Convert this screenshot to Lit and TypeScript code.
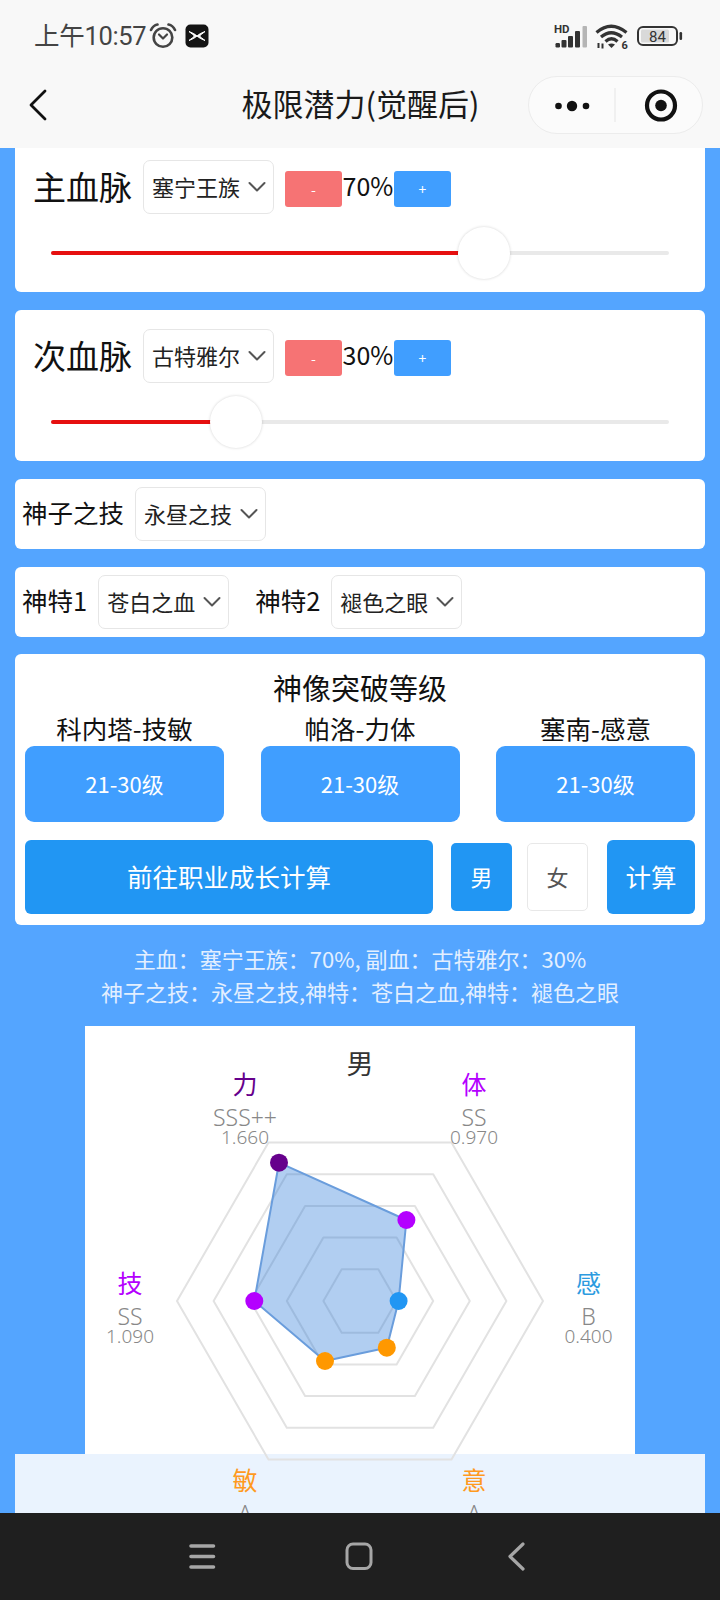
import { LitElement, html, css, svg } from "lit";
import { customElement } from "lit/decorators.js";

const FONT = `"Noto Sans CJK SC", "Noto Sans", sans-serif`;

const chevron = html`<svg class="chev" viewBox="0 0 18 12"><path d="M1.5 2 L9 9.5 L16.5 2" fill="none" stroke="#555" stroke-width="2" stroke-linecap="round" stroke-linejoin="round"/></svg>`;

const CX = 360, CY = 1301, R = 183;
const hex = (r: number) =>
  Array.from({ length: 6 }, (_, i) => {
    const a = (i * Math.PI) / 3;
    return `${(CX + r * Math.cos(a)).toFixed(1)},${(CY + r * Math.sin(a)).toFixed(1)}`;
  }).join(" ");

const points = [
  { x: 279, y: 1162.7, c: "#66008c" },
  { x: 406.4, y: 1220, c: "#b400ff" },
  { x: 398.6, y: 1301, c: "#2196f3" },
  { x: 386.8, y: 1347.7, c: "#ff9800" },
  { x: 325, y: 1361, c: "#ff9800" },
  { x: 254.3, y: 1301, c: "#b400ff" },
];

const labels = [
  { x: 245, y: 1086, t: "力", g: "SSS++", v: "1.660", c: "#66008c" },
  { x: 474, y: 1086, t: "体", g: "SS", v: "0.970", c: "#b400ff" },
  { x: 130, y: 1285, t: "技", g: "SS", v: "1.090", c: "#b400ff" },
  { x: 588.5, y: 1285, t: "感", g: "B", v: "0.400", c: "#2d9be0" },
  { x: 245, y: 1482, t: "敏", g: "A", v: "", c: "#ff9a1f" },
  { x: 474, y: 1482, t: "意", g: "A", v: "", c: "#ff9a1f" },
];

@customElement("app-root")
export class AppRoot extends LitElement {
  static styles = css`
    :host { display: block; width: 720px; height: 1600px; overflow: hidden; font-family: ${css([FONT] as any)}; color: #111; }
    .page { display: flex; flex-direction: column; height: 1600px; background: #54a5ff; }
    .top { background: #f8f8f8; height: 148px; flex: none; display: flex; flex-direction: column; position: relative; z-index: 2; }
    .status { height: 74px; display: flex; align-items: center; padding: 0 37px 2px 34px; box-sizing: border-box; }
    .time { font-size: 25.5px; color: #444; font-family: Roboto, ${css([FONT] as any)}; letter-spacing: -0.3px; line-height: 30px; }
    .alarm { width: 28px; height: 26px; margin-left: 3px; }
    .xapp { width: 24px; height: 24px; margin-left: 8px; }
    .spacer { flex: 1; }
    .sig { width: 36px; height: 26px; }
    .wifi { width: 34px; height: 28px; margin-left: 5px; overflow: visible; }
    .bat { width: 46px; height: 20px; margin-left: 8px; }
    .nav { height: 74px; display: grid; grid-template-columns: 1fr auto 1fr; align-items: center; padding: 0 17px 0 28px; box-sizing: border-box; }
    .back { width: 20px; height: 32px; margin-top: -12px; }
    .title { text-align: center; font-size: 31px; line-height: 40px; margin-top: -16px; color: #1a1a1a; white-space: nowrap; position: relative; left: -5px; }
    .capsule { width: 175px; height: 58px; box-sizing: border-box; border: 1px solid #ececec; border-radius: 29px; background: #fbfbfb; margin-top: -12px; justify-self: end; }
    .capsule svg { display: block; width: 173px; height: 56px; }

    .content { flex: 1; min-height: 0; overflow: hidden; display: flex; flex-direction: column; }
    .card { background: #fff; margin: 18px 15px 0; border-radius: 6px; box-sizing: border-box; flex: none; }
    .card.first { margin-top: 0; border-radius: 0 0 6px 6px; padding: 12px 0 13px; }
    .card.blood { padding: 19px 0 13px; }
    .blood-row { display: flex; align-items: center; height: 54px; padding-left: 19px; }
    .big { font-size: 33px; line-height: 44px; width: 97px; white-space: nowrap; margin: -2px 13px 0 -1px; }
    .sel { flex: none; width: 131px; height: 54px; box-sizing: border-box; border: 1px solid #e6e6e6; border-radius: 7px; background: #fff; display: flex; align-items: center; padding: 0 0 2px 8px; font-size: 22px; color: #222; white-space: nowrap; }
    .sel span { width: 88px; }
    .chev { width: 18px; height: 12px; margin: 2px 0 0 8px; }
    .step { width: 57px; height: 36px; border-radius: 3px; color: #fff; display: flex; align-items: center; justify-content: center; font-size: 14px; margin-top: 4px; flex: none; }
    .minus { background: #f67374; margin-left: 11px; }
    .plus { background: #409eff; }
    .pct { font-size: 25px; width: 52px; line-height: 36px; text-align: center; white-space: nowrap; margin-top: -4px; }
    .slider { position: relative; height: 52px; margin: 13px 36px 0; display: flex; align-items: center; }
    .track { width: 100%; height: 4px; background: #e9e9e9; border-radius: 3px; overflow: hidden; }
    .fill { height: 100%; background: #e60f0f; }
    .knob { position: absolute; top: 0; width: 52px; height: 52px; margin-left: -26px; border-radius: 50%; background: #fff; box-shadow: 0 0 3px rgba(0,0,0,.18); }

    .card.line { height: 70px; display: flex; align-items: center; padding-left: 7px; }
    .mid { font-size: 25.5px; line-height: 36px; white-space: nowrap; margin: -4px 11px 0 0; }
    .gap { margin-left: 26px; }

    .card.statue { height: 271px; margin-top: 17px; padding: 16px 10px 0; }
    .statue-title { text-align: center; font-size: 29px; line-height: 34px; height: 34px; margin-bottom: 6px; }
    .cols { display: grid; grid-template-columns: 199px 199px 199px; justify-content: space-between; }
    .col { text-align: center; }
    .sub { font-size: 25.5px; line-height: 36px; height: 36px; white-space: nowrap; }
    .lvl { height: 76px; box-sizing: border-box; padding-bottom: 3px; border-radius: 9px; background: #409eff; color: #fff; font-size: 22px; display: flex; align-items: center; justify-content: center; }
    .actions { display: flex; align-items: center; margin-top: 18px; }
    .go { width: 408px; height: 74px; box-sizing: border-box; padding-bottom: 3px; border-radius: 6px; background: #2196f3; color: #fff; font-size: 25.5px; display: flex; align-items: center; justify-content: center; }
    .sex { width: 61px; height: 68px; box-sizing: border-box; padding-bottom: 3px; border-radius: 5px; font-size: 22px; display: flex; align-items: center; justify-content: center; }
    .male { background: #2196f3; color: #fff; margin-left: 18px; }
    .female { background: #fff; color: #555; border: 1px solid #e8e8e8; margin-left: 15px; }
    .calc { width: 88px; height: 74px; box-sizing: border-box; padding-bottom: 3px; border-radius: 6px; background: #2196f3; color: #fff; font-size: 25.5px; display: flex; align-items: center; justify-content: center; margin-left: 19px; }

    .summary { flex: none; padding: 17px 0 18px; text-align: center; color: #e3efff; font-size: 22px; line-height: 33px; white-space: nowrap; }
    .chart { position: relative; flex: none; width: 550px; height: 428px; margin-left: 85px; background: #fff; }
    .chart svg { position: absolute; left: 0; top: 0; width: 550px; height: 487px; overflow: visible; z-index: 1; }
    .chart text { font-family: ${css([FONT] as any)}; text-anchor: middle; }
    .chart text.thin { font-family: "Noto Sans", sans-serif; font-weight: 300; }
    .dock { flex: 1; margin: 0 15px; background: #eaf3fe; }

    .bottom { height: 87px; flex: none; background: #1f1f1f; position: relative; z-index: 2; }
    .bottom svg { display: block; width: 720px; height: 87px; }
  `;

  private bloodRow(name: string, sel: string, pct: number, first: boolean) {
    return html`<div class="card ${first ? "first" : "blood"}">
      <div class="blood-row">
        <div class="big">${name}</div>
        <div class="sel"><span>${sel}</span>${chevron}</div>
        <div class="step minus">-</div>
        <div class="pct">${pct}%</div>
        <div class="step plus">+</div>
      </div>
      <div class="slider">
        <div class="track"><div class="fill" style="width:${pct}%"></div></div>
        <div class="knob" style="left:${pct}%"></div>
      </div>
    </div>`;
  }

  private statusBar() {
    return html`<div class="status">
      <span class="time">上午10:57</span>
      <svg class="alarm" viewBox="0 0 28 26">
        <circle cx="14" cy="14.5" r="9.3" fill="none" stroke="#444" stroke-width="2.6"/>
        <path d="M10 11.5 L14 15.5 L18 11.5" fill="none" stroke="#444" stroke-width="2.2" stroke-linecap="round" stroke-linejoin="round"/>
        <path d="M2 7 Q4 2.5 8.5 1.5 M26 7 Q24 2.5 19.5 1.5" fill="none" stroke="#444" stroke-width="2.6" stroke-linecap="round"/>
      </svg>
      <svg class="xapp" viewBox="0 0 24 24">
        <rect x="0.5" y="0.5" width="23" height="23" rx="5" fill="#141414"/>
        <path d="M4 7.5 Q9.5 9.5 12 12 Q14.5 9.5 20 7.5 Q16 10.5 14.5 12 Q16 13.5 20 16.5 Q14.5 14.5 12 12 Q9.5 14.5 4 16.5 Q8 13.5 9.5 12 Q8 10.5 4 7.5Z" fill="#fff" stroke="#fff" stroke-width="1" stroke-linejoin="round"/>
      </svg>
      <div class="spacer"></div>
      <svg class="sig" viewBox="0 0 36 26">
        <text x="0" y="10" font-family="Roboto, sans-serif" font-size="11.5" font-weight="700" fill="#333">HD</text>
        <rect x="1.5" y="20" width="4.5" height="4.5" rx="1.2" fill="#333"/>
        <rect x="7.5" y="17" width="5" height="7.5" rx="1" fill="#333"/>
        <rect x="14" y="13" width="5" height="11.5" rx="1" fill="#333"/>
        <rect x="21" y="8" width="5" height="16.5" rx="1" fill="#333"/>
        <rect x="28.5" y="3" width="4.5" height="21.5" rx="1" fill="#b5b5b5"/>
      </svg>
      <svg class="wifi" viewBox="0 0 34 28">
        <path d="M1.5 10.5 Q16 -2 31.5 10.5" fill="none" stroke="#333" stroke-width="3.2"/>
        <path d="M6 15 Q16 6.5 27 15" fill="none" stroke="#333" stroke-width="3.2"/>
        <path d="M10.5 19.5 Q16.5 14 22.5 19.5" fill="none" stroke="#333" stroke-width="3.2"/>
        <path d="M16.5 26 L13 22.5 Q16.5 20.5 20 22.5Z" fill="#333"/>
        <text x="26.5" y="26.5" font-family="Roboto, sans-serif" font-size="11" font-weight="700" fill="#333">6</text>
        <path d="M3.5 26 L3.5 21 M7.5 26.5 L7.5 21.5" stroke="#333" stroke-width="2"/>
      </svg>
      <svg class="bat" viewBox="0 0 46 20">
        <rect x="4" y="3.5" width="28" height="13" rx="1.5" fill="#d9d9d9"/>
        <rect x="1" y="1" width="39" height="18" rx="5" fill="none" stroke="#333" stroke-width="2"/>
        <rect x="42.5" y="6" width="2.6" height="8" rx="1.2" fill="#333"/>
        <text x="20.5" y="15.5" text-anchor="middle" font-family="Roboto, sans-serif" font-size="15" fill="#333">84</text>
      </svg>
    </div>`;
  }

  private navBar() {
    return html`<div class="nav">
      <svg class="back" viewBox="0 0 20 32"><path d="M17 2 L3 16 L17 30" fill="none" stroke="#111" stroke-width="2.8" stroke-linecap="round" stroke-linejoin="round"/></svg>
      <div class="title">极限潜力(觉醒后)</div>
      <div class="capsule">
        <svg viewBox="0 0 173 56">
          <circle cx="29.5" cy="29" r="3.3" fill="#111"/>
          <circle cx="43" cy="29" r="5.2" fill="#111"/>
          <circle cx="57" cy="29" r="3.3" fill="#111"/>
          <rect x="85.5" y="11" width="1" height="34" fill="#e6e6e6"/>
          <circle cx="132" cy="28.5" r="14" fill="none" stroke="#111" stroke-width="4.2"/>
          <circle cx="132" cy="28.5" r="5.8" fill="#111"/>
        </svg>
      </div>
    </div>`;
  }

  private chart() {
    const poly = points.map((p) => `${p.x},${p.y}`).join(" ");
    return html`<div class="chart">
      <svg viewBox="85 1026 550 487">
        ${[36.6, 73.2, 109.8, 146.4, R].map(
          (r) => svg`<polygon points=${hex(r)} fill="none" stroke="#e2e2e2" stroke-width="2" stroke-linejoin="round"/>`
        )}
        <polygon points=${poly} fill="rgba(40,120,215,.36)" stroke="#6a9ddc" stroke-width="2" stroke-linejoin="round"/>
        ${points.map((p) => svg`<circle cx=${p.x} cy=${p.y} r="9" fill=${p.c}/>`)}
        <text x="360" y="1073.5" font-size="27" fill="#333">男</text>
        ${labels.map(
          (l) => svg`
          <text x=${l.x} y=${l.y + 8} font-size="25" fill=${l.c}>${l.t}</text>
          <text class="thin" x=${l.x} y=${l.y + 40} font-size="23" fill="#888">${l.g}</text>
          <text class="thin" x=${l.x} y=${l.y + 58} font-size="19" fill="#888">${l.v}</text>`
        )}
      </svg>
    </div><div class="dock"></div>`;
  }

  render() {
    return html`<div class="page">
      <div class="top">${this.statusBar()}${this.navBar()}</div>
      <div class="content">
        ${this.bloodRow("主血脉", "塞宁王族", 70, true)}
        ${this.bloodRow("次血脉", "古特雅尔", 30, false)}
        <div class="card line">
          <div class="mid">神子之技</div>
          <div class="sel"><span>永昼之技</span>${chevron}</div>
        </div>
        <div class="card line">
          <div class="mid">神特1</div>
          <div class="sel"><span>苍白之血</span>${chevron}</div>
          <div class="mid gap">神特2</div>
          <div class="sel"><span>褪色之眼</span>${chevron}</div>
        </div>
        <div class="card statue">
          <div class="statue-title">神像突破等级</div>
          <div class="cols">
            ${["科内塔-技敏", "帕洛-力体", "塞南-感意"].map(
              (s) => html`<div class="col"><div class="sub">${s}</div><div class="lvl">21-30级</div></div>`
            )}
          </div>
          <div class="actions">
            <div class="go">前往职业成长计算</div>
            <div class="sex male">男</div>
            <div class="sex female">女</div>
            <div class="calc">计算</div>
          </div>
        </div>
        <div class="summary">主血：塞宁王族：70%, 副血：古特雅尔：30%<br />神子之技：永昼之技,神特：苍白之血,神特：褪色之眼</div>
        ${this.chart()}
      </div>
      <div class="bottom">
        <svg viewBox="0 0 720 87">
          <path d="M191 33 H213.5 M191 43.5 H213.5 M191 54 H213.5" stroke="#a6a6a6" stroke-width="3.6" stroke-linecap="round"/>
          <rect x="347" y="31" width="24" height="24.5" rx="6" fill="none" stroke="#a6a6a6" stroke-width="3"/>
          <path d="M523 31 L510 43.5 L523 56" fill="none" stroke="#a6a6a6" stroke-width="3.2" stroke-linecap="round" stroke-linejoin="round"/>
        </svg>
      </div>
    </div>`;
  }
}
